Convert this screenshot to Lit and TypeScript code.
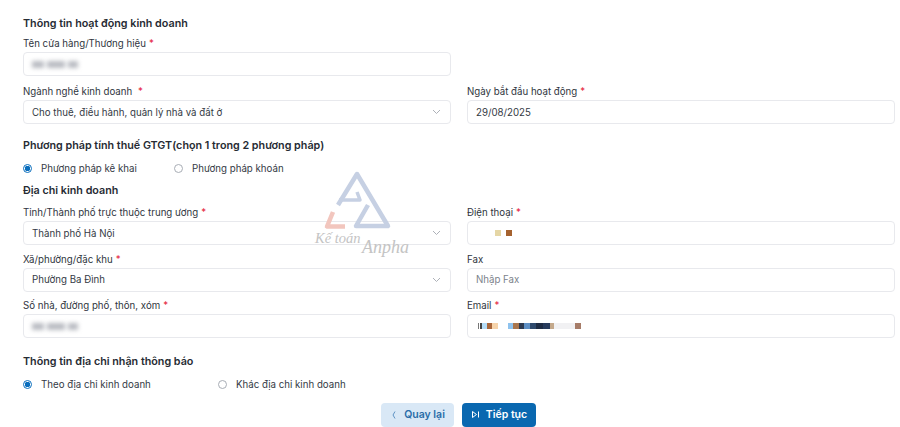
import { LitElement, css, html } from "lit";
import { customElement, property } from "lit/decorators.js";

const chevron = html`<svg class="chev" width="9" height="6" viewBox="0 0 9 6"><path d="M1 1l3.5 3.5L8 1" fill="none" stroke="#adb1b8" stroke-width="1"/></svg>`;

const blurred = html`<span class="blur"><i></i><i></i><i></i></span>`;

// pixelated values: [width, colour]
const phoneBlocks = [[19, "transparent"], [6, "#e5d6a5"], [5, "transparent"], [6, "#a5622f"]];
const emailBlocks = [
    [2, "transparent"], [1, "#777"], [1, "transparent"], [2, "#444"], [5, "#b4dcf7"], [5, "#a9663a"], [6, "#f6d3aa"], [10, "transparent"],
    [5, "#8fc3ee"], [6, "#a9764e"], [5, "#2c3a50"], [6, "#5d8fc4"], [6, "#2f4a6d"], [7, "#1e2c44"], [7, "#273b5c"],
    [4, "#c4a98c"], [21, "#f1f1f3"], [6, "#a67c68"],
];

const pixels = (blocks: (string | number)[][]) => html`<span class="pixels">${blocks.map(
    ([w, c]) => html`<i style="width:${w}px;background:${c}"></i>`
)}</span>`;

@customElement("app-field")
export class AppField extends LitElement {
    @property() label = "";
    @property({ type: Boolean }) required = false;
    @property({ type: Boolean }) select = false;

    render() {
        return html`
        <div class="label">${this.label}${this.required ? html`<span class="star">*</span>` : ""}</div>
        <div class="box"><slot></slot>${this.select ? chevron : ""}</div>`;
    }

    static styles = css`
    :host {
        display: block;
        min-width: 0;
    }
    .label {
        height: 16px;
        line-height: 16px;
        font-size: 9.7px;
        color: #2f3540;
    }
    .star {
        color: #e5233d;
        margin-left: 3px;
    }
    .box {
        box-sizing: border-box;
        height: 24px;
        padding: 0 8px;
        display: flex;
        align-items: center;
        justify-content: space-between;
        background: #fff;
        border: 1px solid #e8e9ed;
        border-radius: 4px;
        font-size: 9.7px;
        color: #343a45;
    }
    .chev {
        margin-right: 1px;
    }
    `;
}

@customElement("app-root")
export class AppRoot extends LitElement {
    render() {
        return html`
        <div class="page">
            <h3 class="first">Thông tin hoạt động kinh doanh</h3>
            <app-field label="Tên cửa hàng/Thương hiệu" required class="half">${blurred}</app-field>
            <div class="row">
                <app-field label="Ngành nghề kinh doanh " required select>Cho thuê, điều hành, quản lý nhà và đất ở</app-field>
                <app-field label="Ngày bắt đầu hoạt động" required>29/08/2025</app-field>
            </div>
            <h3 class="method">Phương pháp tính thuế GTGT(chọn 1 trong 2 phương pháp)</h3>
            <div class="radios">
                <span class="radio on w1">Phương pháp kê khai</span>
                <span class="radio">Phương pháp khoán</span>
            </div>
            <h3 class="addr">Địa chỉ kinh doanh</h3>
            <div class="grid">
                <app-field label="Tỉnh/Thành phố trực thuộc trung ương" required select>Thành phố Hà Nội</app-field>
                <app-field label="Điện thoại" required>${pixels(phoneBlocks)}</app-field>
                <app-field label="Xã/phường/đặc khu" required select>Phường Ba Đình</app-field>
                <app-field label="Fax"><span class="ph">Nhập Fax</span></app-field>
                <app-field label="Số nhà, đường phố, thôn, xóm" required>${blurred}</app-field>
                <app-field label="Email" required>${pixels(emailBlocks)}</app-field>
            </div>
            <h3 class="notice">Thông tin địa chỉ nhận thông báo</h3>
            <div class="radios notice-radios">
                <span class="radio on w2">Theo địa chỉ kinh doanh</span>
                <span class="radio">Khác địa chỉ kinh doanh</span>
            </div>
            <div class="actions">
                <button class="back">
                    <svg width="8" height="10" viewBox="0 0 8 10"><path d="M5 1.5L3 5l2 3.5" fill="none" stroke="#5f93c4" stroke-width="1"/></svg>
                    Quay lại
                </button>
                <button class="next">
                    <svg width="9" height="9" viewBox="0 0 9 9"><path d="M1.5 1.5L5.5 4.5 1.5 7.5zM7.5 1.5v6" fill="none" stroke="#fff" stroke-width="1"/></svg>
                    Tiếp tục
                </button>
            </div>
            <svg class="mark" width="110" height="100" viewBox="0 0 110 100">
                <g fill="none" stroke-linejoin="round">
                    <path d="M33 41L52 10 83 62H51L63 41" stroke="#c6d0e3" stroke-width="4.5"/>
                    <path d="M34 36H55L52 28" stroke="#c6d0e3" stroke-width="3.5"/>
                    <path d="M28 48l-6 14.5h18" stroke="#f2c6be" stroke-width="4.5"/>
                </g>
                <text x="10" y="79" class="mark-a">Kế toán</text>
                <text x="57" y="89" class="mark-b">Anpha</text>
            </svg>
        </div>`;
    }

    static styles = css`
    :host {
        display: block;
        font-family: Inter, "Noto Sans", sans-serif;
    }
    .page {
        position: relative;
        box-sizing: border-box;
        width: 900px;
        height: 427px;
        padding: 16px 6px 0 23px;
        background: #fff;
        overflow: hidden;
    }
    h3 {
        margin: 0;
        height: 15px;
        line-height: 15px;
        font-size: 10.75px;
        font-weight: 600;
        color: #262b33;
    }
    .first {
        margin-bottom: 5px;
    }
    .half {
        width: 428px;
    }
    .row,
    .grid {
        display: grid;
        grid-template-columns: 428px 428px;
        column-gap: 16px;
    }
    .row {
        margin-top: 8px;
    }
    .grid {
        row-gap: 6.5px;
        margin-top: 7px;
    }
    .method {
        margin-top: 14px;
    }
    .addr {
        margin-top: 7px;
    }
    .notice {
        margin-top: 16px;
    }
    .radios {
        display: flex;
        align-items: center;
        height: 15px;
        margin-top: 8px;
    }
    .notice-radios {
        margin-top: 7.5px;
    }
    .radio {
        display: inline-flex;
        align-items: center;
        gap: 9px;
        font-size: 9.7px;
        color: #343a45;
    }
    .radio::before {
        content: "";
        box-sizing: border-box;
        width: 9px;
        height: 9px;
        border-radius: 50%;
        border: 1px solid #a8adb5;
        background: #fff;
    }
    .radio.on::before {
        border: 1px solid #0a6ebd;
        background: radial-gradient(circle, #0a6ebd 0 2.6px, #fff 3px);
    }
    .w1 {
        width: 151px;
    }
    .w2 {
        width: 195px;
    }
    .actions {
        display: flex;
        justify-content: center;
        gap: 8px;
        margin-top: 11px;
    }
    button {
        display: inline-flex;
        align-items: center;
        justify-content: center;
        gap: 6px;
        height: 24px;
        padding: 0;
        border: none;
        border-radius: 4px;
        font: 600 10.5px Inter, "Noto Sans", sans-serif;
    }
    .back {
        width: 73px;
        background: #d9e8f6;
        color: #2a6da8;
    }
    .next {
        width: 74px;
        background: #0a68b0;
        color: #fff;
    }
    .mark {
        position: absolute;
        left: 305px;
        top: 164px;
        pointer-events: none;
    }
    .mark-a,
    .mark-b {
        font-family: "Liberation Serif", serif;
        font-style: italic;
        fill: #c4c4c4;
    }
    .mark-a {
        font-size: 14.5px;
    }
    .mark-b {
        font-size: 18px;
    }
    .blur {
        display: flex;
        gap: 3px;
        height: 7px;
        filter: blur(2px);
    }
    .blur i {
        display: block;
        background: #b9bcc2;
    }
    .blur i:nth-child(1) {
        width: 12px;
    }
    .blur i:nth-child(2) {
        width: 18px;
    }
    .blur i:nth-child(3) {
        width: 10px;
    }
    .pixels {
        display: flex;
        height: 6px;
    }
    .pixels i {
        display: block;
        height: 100%;
    }
    .ph {
        color: #7c828b;
    }
    `;
}
